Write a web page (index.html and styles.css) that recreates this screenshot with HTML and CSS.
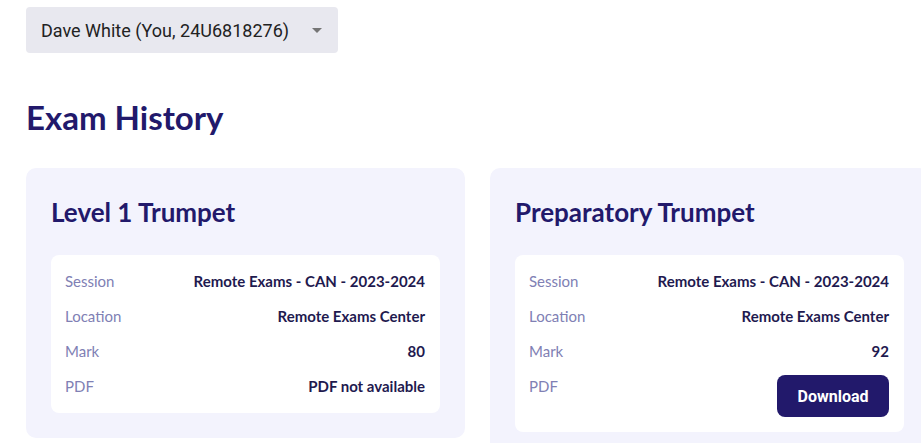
FILE: index.html
```html
<!DOCTYPE html>
<html lang="en">
<head>
    <meta charset="UTF-8">
    <meta name="viewport" content="width=device-width, initial-scale=1.0">
    <title>Exam History</title>
    <link rel="stylesheet" href="styles.css">
</head>
<body>
    <div class="page">
        <div class="candidate-select">
            <span>Dave White (You, 24U6818276)</span>
            <span class="caret"></span>
        </div>

        <h1 class="page-title">Exam History</h1>

        <div class="exam-list">
            <div class="exam-card">
                <h2 class="exam-name">Level 1 Trumpet</h2>
                <div class="exam-details">
                    <div class="row"><span class="label">Session</span><span class="value">Remote Exams - CAN - 2023-2024</span></div>
                    <div class="row"><span class="label">Location</span><span class="value">Remote Exams Center</span></div>
                    <div class="row"><span class="label">Mark</span><span class="value">80</span></div>
                    <div class="row"><span class="label">PDF</span><span class="value">PDF not available</span></div>
                </div>
            </div>

            <div class="exam-card">
                <h2 class="exam-name">Preparatory Trumpet</h2>
                <div class="exam-details">
                    <div class="row"><span class="label">Session</span><span class="value">Remote Exams - CAN - 2023-2024</span></div>
                    <div class="row"><span class="label">Location</span><span class="value">Remote Exams Center</span></div>
                    <div class="row"><span class="label">Mark</span><span class="value">92</span></div>
                    <div class="row"><span class="label">PDF</span><button class="btn-download">Download</button></div>
                </div>
            </div>
        </div>
    </div>
</body>
</html>
```

FILE: styles.css
```css
/* cores do design system */
:root {
    --indigo: #22196b;
    --navy-text: #1f1a4f;
    --muted: #8080b4;
    --card-bg: #f3f3fd;
}

* {
    margin: 0;
    padding: 0;
    box-sizing: border-box;
}

html, body {
    overflow: hidden;
}

body {
    background: #ffffff;
    font-family: Lato, "Open Sans", sans-serif;
}

.page {
    padding: 7px 0 0 26px;
}

/* select do candidato */
.candidate-select {
    display: flex;
    align-items: center;
    justify-content: space-between;
    width: 312px;
    height: 46px;
    padding: 0 16px 0 15px;
    background: #e8e8ef;
    border-radius: 4px;
    font-family: Roboto, "Liberation Sans", sans-serif;
    font-size: 18px;
    color: #222222;
}

.caret {
    width: 0;
    height: 0;
    border-left: 5px solid transparent;
    border-right: 5px solid transparent;
    border-top: 5px solid #757575;
}

.page-title {
    margin-top: 44px;
    font-size: 33px;
    line-height: 40px;
    font-weight: 700;
    color: var(--indigo);
}

.exam-list {
    display: grid;
    grid-template-columns: 439px 439px;
    gap: 25px;
    align-items: start;
    margin-top: 31px;
}

.exam-card {
    background: var(--card-bg);
    border-radius: 10px;
    padding: 28px 25px 25px;
}

.exam-name {
    font-size: 26px;
    line-height: 32px;
    font-weight: 700;
    color: var(--indigo);
    margin-bottom: 27px;
}

.exam-details {
    background: #ffffff;
    border-radius: 8px;
    padding: 9px 15px 9px 14px;
}

.row {
    display: flex;
    justify-content: space-between;
    align-items: flex-start;
    padding: 6px 0;
    font-size: 15px;
    line-height: 23px;
}

.label {
    color: var(--muted);
}

.value {
    color: var(--navy-text);
    font-weight: 700;
}

.btn-download {
    width: 112px;
    height: 42px;
    border: none;
    border-radius: 8px;
    background: var(--indigo);
    color: #ffffff;
    font-family: Roboto, "Liberation Sans", sans-serif;
    font-size: 16px;
    font-weight: 700;
}
```
